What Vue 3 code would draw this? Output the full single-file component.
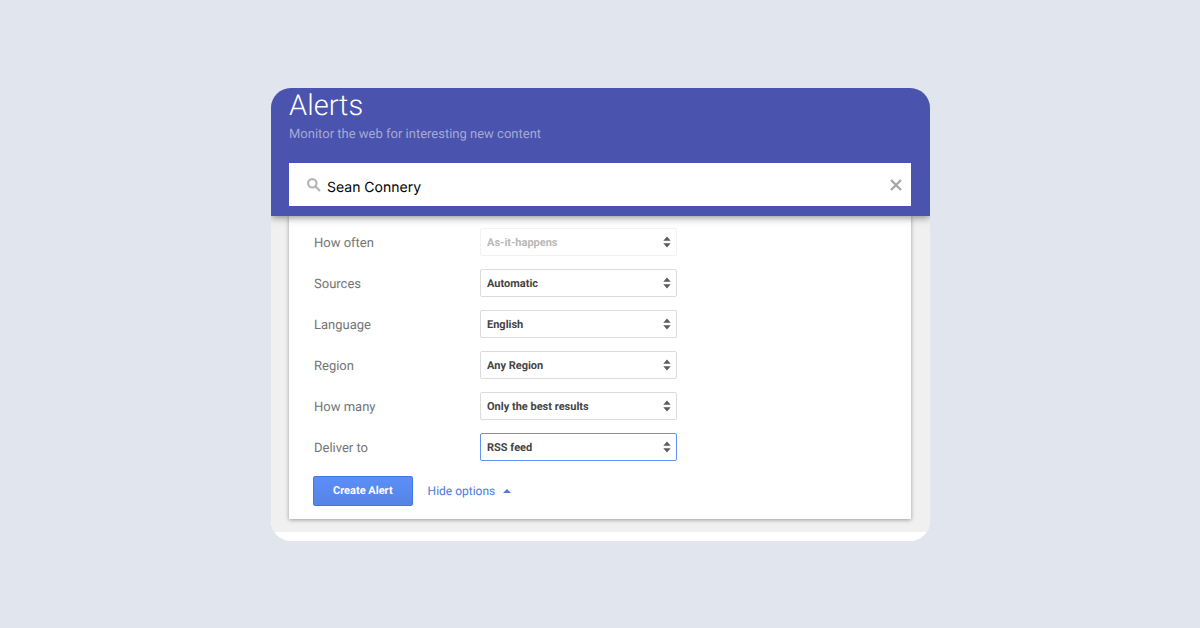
<script setup>
import { ref } from 'vue'

const query = ref('Sean Connery')
const fields = ref([
  { id: 'often', label: 'How often', value: 'As-it-happens', options: ['As-it-happens', 'At most once a day'], disabled: true },
  { id: 'sources', label: 'Sources', value: 'Automatic', options: ['Automatic', 'News', 'Blogs'] },
  { id: 'language', label: 'Language', value: 'English', options: ['English', 'French', 'German'] },
  { id: 'region', label: 'Region', value: 'Any Region', options: ['Any Region', 'United States'] },
  { id: 'many', label: 'How many', value: 'Only the best results', options: ['Only the best results', 'All results'] },
  { id: 'deliver', label: 'Deliver to', value: 'RSS feed', options: ['RSS feed', 'Email'], active: true }
])
</script>

<template>
  <main class="page">
    <section class="card">
      <header class="header">
        <h1>Alerts</h1>
        <p>Monitor the web for interesting new content</p>
        <div class="search">
          <svg class="lens" viewBox="0 0 14 14" aria-hidden="true">
            <circle cx="5.3" cy="5.3" r="4.2" />
            <path d="M8.4 8.4 L13 13" />
          </svg>
          <input v-model="query" type="text" aria-label="Create an alert about" />
          <button class="clear" type="button" aria-label="Clear" @click="query = ''">
            <svg viewBox="0 0 12 12" aria-hidden="true"><path d="M1 1 L11 11 M11 1 L1 11" /></svg>
          </button>
        </div>
      </header>
      <div class="body">
        <form class="panel" @submit.prevent>
          <div v-for="f in fields" :key="f.id" class="row">
            <label :for="f.id">{{ f.label }}</label>
            <div class="select" :class="{ disabled: f.disabled, active: f.active }">
              <select :id="f.id" v-model="f.value" :disabled="f.disabled">
                <option v-for="o in f.options" :key="o">{{ o }}</option>
              </select>
              <svg viewBox="0 0 8 12" aria-hidden="true"><path d="M4 0.5 L7.7 4.8 H0.3 Z M0.3 7.2 H7.7 L4 11.5 Z" /></svg>
            </div>
          </div>
          <div class="actions">
            <button class="create" type="submit">Create Alert</button>
            <a href="#">Hide options
              <svg viewBox="0 0 8 4" aria-hidden="true"><path d="M4 0 L8 4 H0 Z" /></svg>
            </a>
          </div>
        </form>
      </div>
    </section>
  </main>
</template>

<style>
body {
  margin: 0;
  background: #e1e5ed;
}
</style>

<style scoped>
.page {
  box-sizing: border-box;
  min-height: 100vh;
  padding: 25px 24px 24px 25px;
  display: flex;
  align-items: center;
  justify-content: center;
  font-family: Roboto, "Liberation Sans", sans-serif;
  text-rendering: geometricPrecision;
}
.card {
  width: 100%;
  max-width: 659px;
  padding-bottom: 9px;
  border-radius: 20px;
  overflow: hidden;
  background: #fff;
}
.header {
  position: relative;
  padding: 0 19px 10px 18px;
  background: #4a53ad;
  box-shadow: 0 1px 8px rgba(0, 0, 0, 0.5);
}
h1 {
  margin: 0;
  font-size: 29px;
  line-height: 36px;
  font-weight: 300;
  color: #fff;
}
p {
  margin: 0 0 18px;
  padding-top: 1px;
  font-size: 13px;
  line-height: 20px;
  color: #a5a9d6;
}
.search {
  display: flex;
  align-items: center;
  box-sizing: border-box;
  height: 43px;
  padding: 0 7px 0 18px;
  background: #fff;
}
.lens {
  width: 14px;
  height: 14px;
  fill: none;
  stroke: #b5b5b5;
  stroke-width: 2.2;
}
.search input {
  flex: 1;
  min-width: 0;
  padding: 6px 6px 0;
  border: 0;
  outline: 0;
  background: none;
  font-family: Inter, "Liberation Sans", sans-serif;
  font-size: 14px;
  line-height: 20px;
  color: #000;
  text-rendering: inherit;
}
.clear {
  display: flex;
  padding: 2px;
  border: 0;
  background: none;
}
.clear svg {
  width: 12px;
  height: 12px;
  fill: none;
  stroke: #a8a8a8;
  stroke-width: 2.4;
}
.body {
  padding: 0 19px 13px 18px;
  background: #f0f0f0;
}
.panel {
  display: flex;
  flex-direction: column;
  gap: 13px;
  padding: 12px 24px 13px;
  background: #fff;
  box-shadow: 0 1px 4px rgba(0, 0, 0, 0.36);
}
.row {
  display: grid;
  grid-template-columns: 166px minmax(0, 197px);
  align-items: center;
  padding-left: 1px;
}
label {
  padding-top: 3px;
  font-size: 13px;
  line-height: 20px;
  color: #757575;
}
.select {
  position: relative;
}
select {
  display: block;
  box-sizing: border-box;
  width: 100%;
  height: 28px;
  padding: 0 20px 0 6px;
  border: 1px solid #dcdcdc;
  border-radius: 2px;
  outline: 0;
  appearance: none;
  background: #fff;
  font-family: inherit;
  font-size: 11px;
  font-weight: 700;
  color: #444;
  opacity: 1;
  text-rendering: inherit;
}
.select svg {
  position: absolute;
  top: 8px;
  right: 6px;
  width: 8px;
  height: 12px;
  fill: #5c5c5c;
  pointer-events: none;
}
.disabled select {
  border-color: #f2f2f2;
  color: #b8b8b8;
}
.active select {
  border-color: #5f93f5;
}
.actions {
  display: flex;
  align-items: center;
  gap: 15px;
  padding-top: 2px;
}
.create {
  height: 30px;
  padding: 0 19px 1px;
  border: 1px solid #3f78e4;
  border-radius: 2px;
  background: linear-gradient(#5b8ff8, #5584e4);
  font-family: inherit;
  font-size: 11px;
  font-weight: 700;
  color: #fff;
  text-rendering: inherit;
}
a {
  display: flex;
  align-items: center;
  gap: 8px;
  padding-bottom: 1px;
  font-size: 12px;
  line-height: 20px;
  color: #4d7ae0;
  text-decoration: none;
}
a svg {
  width: 8px;
  height: 4px;
  fill: #4d7ae0;
}
</style>
